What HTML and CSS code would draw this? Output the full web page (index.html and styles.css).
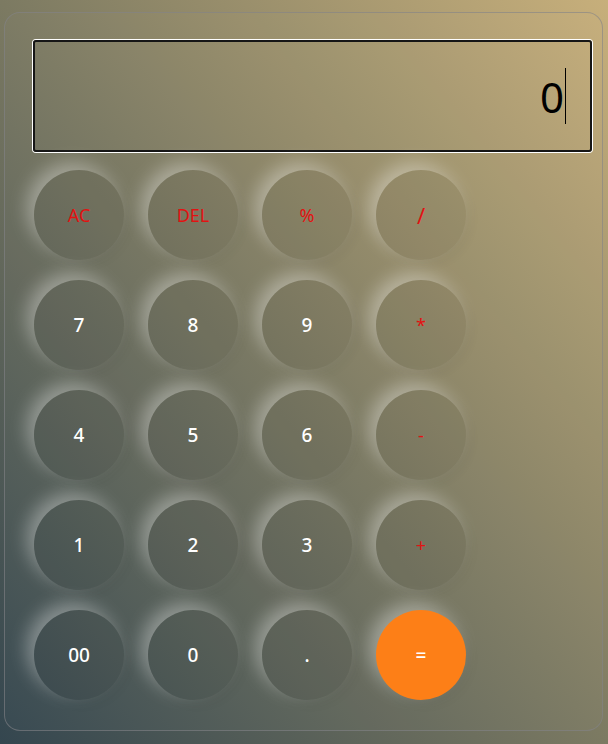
FILE: index.html
```html
<!DOCTYPE html>
<html lang="en">
<head>
<meta charset="utf-8">
<title>Calculator</title>
<link rel="stylesheet" href="styles.css">
</head>
<body>
<div class="calc">
  <div class="display"><span class="value">0</span><span class="caret"></span></div>
  <div class="keys">
    <button class="key op">AC</button>
    <button class="key op">DEL</button>
    <button class="key op">%</button>
    <button class="key op slash">/</button>
    <button class="key">7</button>
    <button class="key">8</button>
    <button class="key">9</button>
    <button class="key op">*</button>
    <button class="key">4</button>
    <button class="key">5</button>
    <button class="key">6</button>
    <button class="key op">-</button>
    <button class="key">1</button>
    <button class="key">2</button>
    <button class="key">3</button>
    <button class="key op">+</button>
    <button class="key">00</button>
    <button class="key">0</button>
    <button class="key">.</button>
    <button class="key equal">=</button>
  </div>
</div>
</body>
</html>
```

FILE: styles.css
```css
html, body {
  margin: 0;
  height: 100%;
}
body {
  background: linear-gradient(to top right, #34464f 0%, #7c7a62 50%, #c7af7b 100%);
  font-family: "Noto Sans", "Open Sans", sans-serif;
  overflow: hidden;
}
.calc {
  box-sizing: border-box;
  margin: 12px 5px 0 4px;
  height: 719px;
  border: 1px solid rgba(130, 130, 135, 0.6);
  border-radius: 16px;
  padding: 27px 0 0 27px;
  background: rgba(255, 255, 255, 0.02);
}
.display {
  box-sizing: border-box;
  width: 559px;
  height: 112px;
  margin-left: 1px;
  border: 2px solid #161616;
  border-radius: 3px;
  box-shadow: 0 0 0 1px #ffffff;
  display: flex;
  align-items: center;
  justify-content: flex-end;
  padding-right: 24px;
}
.value {
  font-size: 42px;
  font-weight: 400;
  color: #000;
  line-height: 1;
  margin-top: 2px;
}
.caret {
  width: 0;
  height: 56px;
  border-left: 1px solid #000;
  margin-left: 1px;
}
.keys {
  display: grid;
  grid-template-columns: repeat(4, 90px);
  column-gap: 24px;
  row-gap: 20px;
  margin-top: 18px;
  margin-left: 2px;
}
.key {
  width: 90px;
  height: 90px;
  border-radius: 50%;
  border: none;
  padding: 0;
  background: rgba(0, 0, 0, 0.05);
  box-shadow: -7px -7px 18px rgba(255, 255, 255, 0.35), 4px 4px 12px rgba(0, 0, 0, 0.05);
  color: #ffffff;
  font-family: "Noto Sans", "Open Sans", sans-serif;
  font-size: 19px;
  font-weight: 500;
}
.op {
  color: #e21212;
  font-size: 18px;
  font-weight: 400;
}
.slash {
  font-size: 22px;
}
.equal {
  background: #fd7f17;
  color: #ffffff;
  font-weight: 500;
}
```
